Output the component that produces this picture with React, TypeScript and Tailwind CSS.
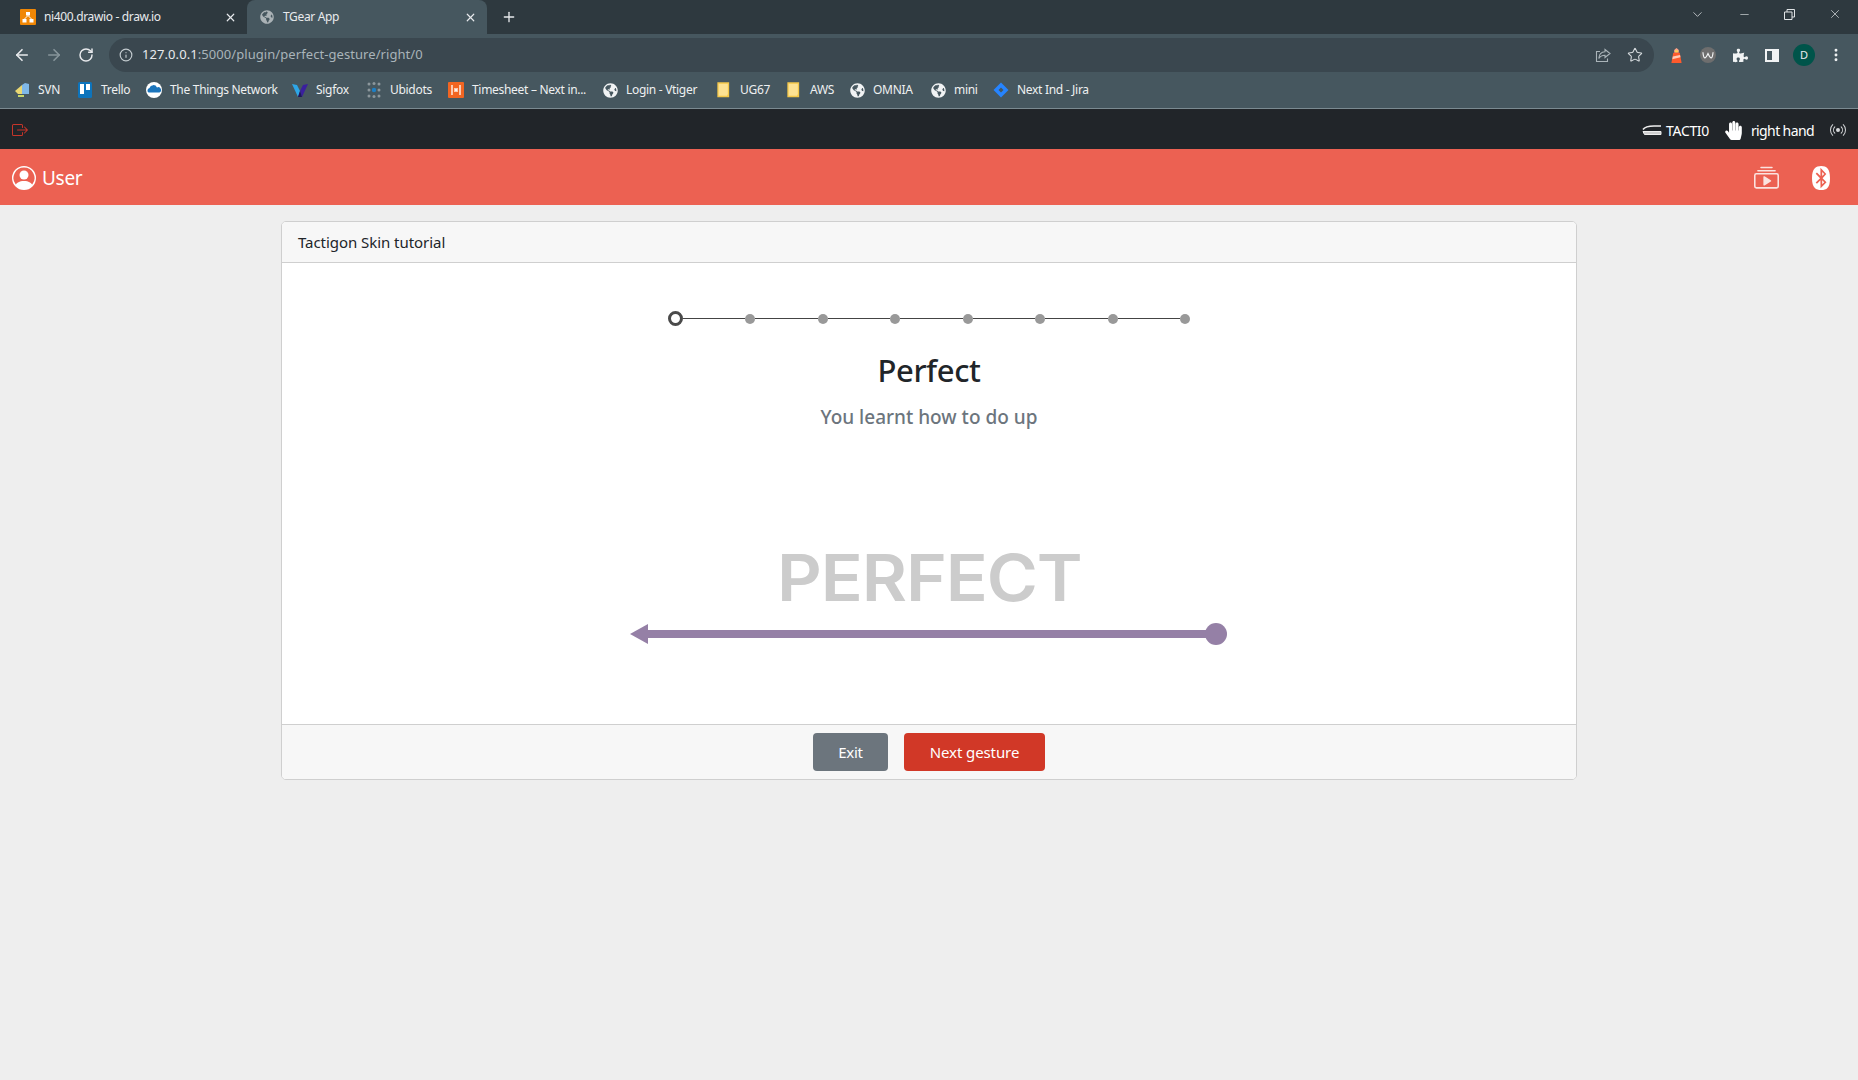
import React from "react";
import { ArrowLeft, ArrowRight, RotateCw, Info, X, Plus, Star, ChevronDown, Minus, MoreVertical } from "lucide-react";
import { BsPersonCircle, BsBoxArrowRight, BsBroadcast, BsCollectionPlay } from "react-icons/bs";
import { FaGlobeAmericas, FaPuzzlePiece, FaHandPaper, FaBluetooth } from "react-icons/fa";

const Globe = ({ className = "text-[#f1f3f4] text-[15px]" }: { className?: string }) => (
  <span className={className}><FaGlobeAmericas /></span>
);

const Folder = () => (
  <svg width="14" height="16" viewBox="0 0 14 16">
    <path d="M1 1h10.5v13.5H1z" fill="#fde293" stroke="#f4c84a" strokeWidth="1.3" />
    <path d="M11.5 11v3.5H9.8z" fill="#f4c84a" />
  </svg>
);

const Bookmark = ({ w, icon, label }: { w: string; icon: React.ReactNode; label: string }) => (
  <div className={`flex items-center shrink-0 ${w}`}>
    <span className="w-4 h-4 flex items-center justify-center shrink-0">{icon}</span>
    <span className="ml-2 whitespace-nowrap tracking-[-0.3px]">{label}</span>
  </div>
);

const ToolSlot = ({ children }: { children: React.ReactNode }) => (
  <span className="w-8 flex items-center justify-center">{children}</span>
);

const Dot = () => <span className="w-[10px] h-[10px] rounded-full bg-[#999999] shrink-0" />;
const Line = () => <span className="flex-1 h-px bg-[#444444]" />;

export default function App() {
  return (
    <div className="min-h-[1080px] bg-[#eeeeee] font-['Noto_Sans','Open_Sans',sans-serif] text-[#212529]">
      {/* Tab strip */}
      <div className="h-[34px] bg-[#2e393f] flex text-[12px] text-[#e8eaed]">
        <div className="w-[247px] flex items-center pl-[20px] pr-[10px] shrink-0">
          <svg width="16" height="16" viewBox="0 0 16 16" className="shrink-0">
            <rect width="16" height="16" fill="#f08705" rx="1" />
            <rect x="6" y="3" width="4" height="3.5" fill="#fff" />
            <rect x="2.5" y="10" width="4" height="3.5" fill="#fff" />
            <rect x="9.5" y="10" width="4" height="3.5" fill="#fff" />
            <path d="M8 6.5 4.5 10M8 6.5l3.5 3.5" stroke="#fff" strokeWidth="1" />
          </svg>
          <span className="ml-2 tracking-[-0.35px] whitespace-nowrap">ni400.drawio - draw.io</span>
          <X size={13} strokeWidth={2.2} className="ml-auto" />
        </div>
        <div className="w-[240px] bg-[#46575f] rounded-t-[8px] flex items-center pl-[13px] pr-[10px] shrink-0">
          <Globe className="text-[#aab2b6] text-[14px]" />
          <span className="ml-[9px] tracking-[-0.35px] whitespace-nowrap">TGear App</span>
          <X size={13} strokeWidth={2.2} className="ml-auto" />
        </div>
        <div className="ml-[14px] flex items-center">
          <Plus size={16} strokeWidth={2} />
        </div>
        <div className="ml-auto flex items-center pb-[6px] text-[#dfe3e5]">
          <ChevronDown size={15} strokeWidth={1.2} className="mr-[33px]" />
          <Minus size={13} strokeWidth={1.2} className="mr-[33px]" />
          <svg width="11" height="11" viewBox="0 0 11 11" fill="none" stroke="currentColor" className="mr-[33px]">
            <path d="M.5 3h7.5v7.5H.5zM3 3V.5h7.5V8H8" />
          </svg>
          <X size={14} strokeWidth={1.2} className="mr-[16px]" />
        </div>
      </div>

      {/* Toolbar */}
      <div className="h-[38px] bg-[#46575f] flex items-start pt-[4px] text-[#e8eaed]">
        <div className="h-[34px] flex items-center pl-[13px] shrink-0">
          <ArrowLeft size={18} strokeWidth={2.2} />
          <ArrowRight size={18} strokeWidth={2.2} className="ml-[14px] text-[#87959b]" />
          <RotateCw size={16} strokeWidth={2.2} className="ml-[15px]" />
        </div>
        <div className="ml-[15px] w-[1545px] h-[34px] rounded-full bg-[#3a474f] flex items-center pl-[10px] pr-[11px] shrink-0">
          <Info size={14} className="text-[#c3cbcf]" />
          <span className="ml-[9px] text-[13px] tracking-[0.07px]">
            127.0.0.1<span className="text-[#a9b4b9]">:5000/plugin/perfect-gesture/right/0</span>
          </span>
          <svg width="16" height="16" viewBox="0 0 16 16" fill="none" stroke="#aab4b9" strokeWidth="1.1" className="ml-auto mr-[16px]">
            <path d="M10 2.500 15 6.500 10 10.500V8.200C7 8.200 5 9.200 3.800 11.500 4 8 6 5 10 4.800z" />
            <path d="M5 4.500H1.500v10h11v-3" />
          </svg>
          <Star size={16} strokeWidth={1.6} className="text-[#d5dadd]" />
        </div>
        <div className="h-[34px] flex items-center ml-[6px]">
          <ToolSlot>
            <svg width="13" height="17" viewBox="0 0 14 18">
              <path d="M4.500 3 7 1l2.500 2v3h-5z" fill="#ffa385" />
              <path d="M3.500 6h7l2 11h-11z" fill="#ff5a2c" />
              <path d="M3 10l7.800-1.500.5 2.500-8.800 2z" fill="#ffc9b5" />
              <rect x="5.500" y="3.500" width="3" height="2" fill="#ffd54a" />
            </svg>
          </ToolSlot>
          <ToolSlot>
            <span className="w-[16px] h-[16px] rounded-full bg-[#6e6e6e] text-[#f1f3f4] flex items-center justify-center">
              <svg width="12" height="8" viewBox="0 0 13 8" fill="none" stroke="currentColor" strokeWidth="1.3"><path d="M1 1c.8 8 2.600 8 5.500 1.500C9.400 9 11.200 9 12 1" /></svg>
            </span>
          </ToolSlot>
          <ToolSlot><span className="text-[15px] text-[#f1f3f4]"><FaPuzzlePiece /></span></ToolSlot>
          <ToolSlot><span className="w-[14px] h-[13px] border-2 border-[#f1f3f4] border-r-[7px] box-border" /></ToolSlot>
          <ToolSlot><span className="w-[22px] h-[22px] shrink-0 rounded-full bg-[#00544a] text-[11px] flex items-center justify-center">D</span></ToolSlot>
          <ToolSlot><MoreVertical size={16} strokeWidth={2.4} className="text-[#f1f3f4]" /></ToolSlot>
        </div>
      </div>

      {/* Bookmarks */}
      <div className="h-[37px] bg-[#46575f] border-b border-[#7b8a91] flex items-center pl-[14px] text-[12px] text-[#eef0f1] box-border">
        <Bookmark w="w-[63px]" label="SVN" icon={
          <svg width="16" height="16" viewBox="0 0 16 16"><path d="M1 9 8 3v9H4z" fill="#e9d772" /><path d="M8 3l3-2 4 1v10H8z" fill="#7fb8e8" /><rect x="4" y="13" width="6" height="2" fill="#c8d66a" /></svg>
        } />
        <Bookmark w="w-[69px]" label="Trello" icon={
          <svg width="14" height="16" viewBox="0 0 14 16"><rect width="14" height="16" rx="1.500" fill="#0d74bc" /><rect x="2" y="2" width="4" height="10" fill="#fff" /><rect x="8" y="2" width="4" height="6" fill="#fff" /></svg>
        } />
        <Bookmark w="w-[146px]" label="The Things Network" icon={
          <svg width="16" height="16" viewBox="0 0 16 16"><circle cx="8" cy="8" r="8" fill="#fff" /><path d="M2.500 10.500a2.500 2.500 0 0 1 1-4.500 4 4 0 0 1 7.500-.5 2.600 2.600 0 0 1 2.500 5z" fill="#1b75bc" /></svg>
        } />
        <Bookmark w="w-[74px]" label="Sigfox" icon={
          <svg width="16" height="16" viewBox="0 0 16 16"><path d="M0 2l5 1 3 6-2 6z" fill="#2da6e8" /><path d="M16 2l-5 1-3 6 2 6z" fill="#3a1f9e" /><path d="M6 15l2-6 2 6z" fill="#1d1560" /></svg>
        } />
        <Bookmark w="w-[82px]" label="Ubidots" icon={
          <svg width="16" height="16" viewBox="0 0 16 16" fill="#8c979c">
            <circle cx="3" cy="2" r="1.500" /><circle cx="8" cy="1.500" r="1.500" /><circle cx="13" cy="2" r="1.500" />
            <circle cx="3" cy="8" r="1.500" /><circle cx="13" cy="8" r="1.500" />
            <circle cx="3" cy="14" r="1.500" /><circle cx="8" cy="14.500" r="1.500" /><circle cx="13" cy="14" r="1.500" />
            <circle cx="8" cy="8" r="2.200" fill="#1d7fc4" />
          </svg>
        } />
        <Bookmark w="w-[154px]" label="Timesheet – Next in..." icon={
          <svg width="16" height="16" viewBox="0 0 16 16"><rect width="16" height="16" rx="1" fill="#f26522" /><path d="M4 3v10M7 6v4M9 6v4M7 8h2M12 3v10" stroke="#fff" strokeWidth="1.300" /></svg>
        } />
        <Bookmark w="w-[114px]" label="Login - Vtiger" icon={<Globe />} />
        <Bookmark w="w-[70px]" label="UG67" icon={<Folder />} />
        <Bookmark w="w-[63px]" label="AWS" icon={<Folder />} />
        <Bookmark w="w-[81px]" label="OMNIA" icon={<Globe />} />
        <Bookmark w="w-[63px]" label="mini" icon={<Globe />} />
        <Bookmark w="w-[98px]" label="Next Ind - Jira" icon={
          <svg width="16" height="16" viewBox="0 0 16 16"><path d="M8 .5 15.500 8 8 15.500.5 8z" fill="#2684ff" /><path d="M8 5.500 10.500 8 8 10.500 5.500 8z" fill="#46575f" /></svg>
        } />
      </div>

      {/* Dark bar */}
      <div className="h-[40px] bg-[#212529] flex items-center pt-[2px] pl-[12px] pr-[12px] text-[14px] text-white">
        <BsBoxArrowRight className="text-[#c6352a] text-[16px]" />
        <svg width="20" height="10" viewBox="0 0 20 10" fill="none" className="ml-auto" stroke="#eeeeee">
          <path d="M1 4.500C3 1.500 7 1 12 1h7" strokeWidth="1.500" />
          <path d="M1 6.500h18v3H2.500z" fill="#cfcfcf" strokeWidth="1" />
        </svg>
        <span className="ml-[4px] tracking-[-0.35px]">TACTI0</span>
        <FaHandPaper className="ml-[15px] text-[19px]" />
        <span className="ml-[8px] tracking-[-0.6px]">right hand</span>
        <BsBroadcast className="ml-[16px] text-[16px] text-[#d6d8da]" />
      </div>

      {/* Red bar */}
      <div className="h-[56px] bg-[#ec6152] flex items-center pt-[2px] pl-[12px] text-white">
        <BsPersonCircle className="text-[24px]" />
        <span className="ml-[6px] text-[19px] tracking-[-0.3px]">User</span>
        <BsCollectionPlay className="ml-auto text-[25px] text-[#fbe3e0]" />
        <FaBluetooth className="ml-[30px] mr-[25px] text-[24px]" />
      </div>

      {/* Card */}
      <div className="w-[1296px] h-[559px] mx-auto mt-4 bg-white border border-[#cfcfcf] rounded-[5px] flex flex-col box-border overflow-hidden">
        <div className="h-[41px] bg-[#f7f7f7] border-b border-[#cfcfcf] flex items-center px-4 text-[15px] tracking-[-0.05px] shrink-0 box-border">
          Tactigon Skin tutorial
        </div>
        <div className="flex-1 flex flex-col items-center">
          <div className="w-[522px] mt-[48px] flex items-center">
            <span className="w-[15px] h-[15px] rounded-full border-[3px] border-[#4a4a4a] bg-white shrink-0" />
            <Line /><Dot /><Line /><Dot /><Line /><Dot /><Line /><Dot /><Line /><Dot /><Line /><Dot /><Line /><Dot />
          </div>
          <h1 className="mt-[22px] text-[31px] leading-[44px] font-medium tracking-[-0.4px]">Perfect</h1>
          <p className="mt-[11px] text-[19px] leading-[28px] font-medium text-[#6c757d]">You learnt how to do up</p>
          <div className="mt-[115px] text-[64px] leading-[64px] font-semibold text-[#cccccc] font-['Inter',sans-serif] tracking-[-1px] scale-x-[1.085]">PERFECT</div>
          <svg width="598" height="24" viewBox="0 0 598 24" className="mt-[12px]">
            <path d="M0 12 18 2v20z" fill="#9580a6" />
            <rect x="16" y="8" width="570" height="8" fill="#9580a6" />
            <circle cx="586" cy="12" r="11" fill="#9580a6" />
          </svg>
        </div>
        <div className="h-[55px] bg-[#f7f7f7] border-t border-[#cfcfcf] flex items-center justify-center gap-4 text-[15px] text-white shrink-0 box-border">
          <button className="w-[75px] h-[38px] rounded-[4px] bg-[#6c757d] tracking-[-0.25px]">Exit</button>
          <button className="w-[141px] h-[38px] rounded-[4px] bg-[#d13827] tracking-[-0.1px]">Next gesture</button>
        </div>
      </div>
    </div>
  );
}
